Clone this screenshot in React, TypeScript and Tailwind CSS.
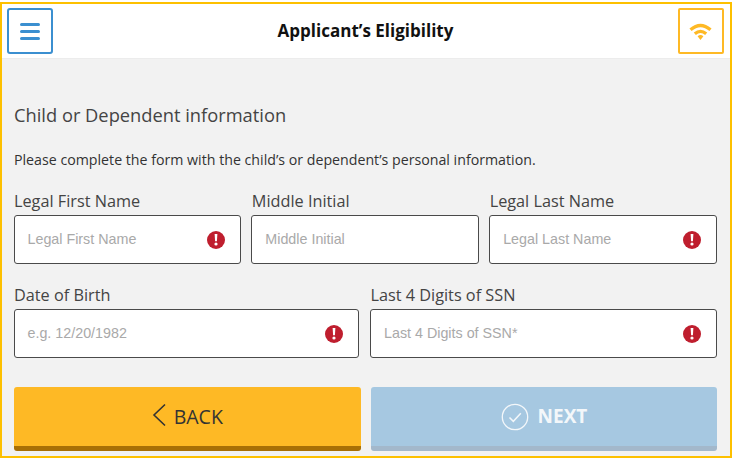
function ErrorDot() {
  return (
    <span className="flex h-[18px] w-[18px] shrink-0 items-center justify-center rounded-full bg-[#bf1e2e]">
      <svg width="4" height="12" viewBox="0 0 4 12" fill="#fff">
        <path d="M0.6 0h2.8l-0.5 7.2H1.1z" />
        <circle cx="2" cy="10" r="1.6" />
      </svg>
    </span>
  );
}

function Field({ label, placeholder, error = true }: { label: string; placeholder: string; error?: boolean }) {
  return (
    <div className="min-w-0">
      <div className="h-[24px] pl-[0.5px] text-[16.25px] leading-[20px] text-[#444]">{label}</div>
      <div className="flex h-[49px] items-center justify-between rounded-[3px] border-[1.5px] border-[#4a4a4a] bg-white pl-[13px] pr-[15px]">
        <span className="font-['Liberation_Sans',sans-serif] text-[14.3px] text-[#a9a9a9]">{placeholder}</span>
        {error && <ErrorDot />}
      </div>
    </div>
  );
}

export default function App() {
  return (
    <div className="mt-[2px] flex h-[456px] w-[732px] flex-col border-2 border-[#fdc000] bg-[#f2f2f2] font-['Open_Sans',sans-serif]">
      <header className="flex h-[55px] shrink-0 items-start justify-between border-b border-[#ececec] bg-white pl-[5px] pr-[6px] pt-[4px]">
        <button className="flex h-[46px] w-[46px] items-center justify-center rounded-[3px] border-2 border-[#3b8fd0]">
          <svg width="20" height="17" viewBox="0 0 20 17" fill="#3b8fd0">
            <rect y="0" width="20" height="3" rx="1.5" />
            <rect y="7" width="20" height="3" rx="1.5" />
            <rect y="14" width="20" height="3" rx="1.5" />
          </svg>
        </button>
        <h1 className="pt-[9px] text-[17px] font-bold leading-[28px] text-[#111]">Applicant’s Eligibility</h1>
        <button className="flex h-[46px] w-[46px] items-center justify-center rounded-[2px] border-2 border-[#feb925]">
          <svg width="23" height="17" viewBox="0 0 23 17" fill="none" stroke="#feb925" strokeWidth="3.200">
            <path d="M1.500 6.800Q11.500-1.800 21.500 6.800" />
            <path d="M5.800 10.800Q11.500 5.800 17.200 10.800" />
            <path d="M8.600 13.200Q11.500 11 14.400 13.200L11.500 17z" fill="#feb925" stroke="none" />
          </svg>
        </button>
      </header>

      <main className="flex flex-1 flex-col pl-[11.5px] pr-[13px]">
        <h2 className="mt-[42px] pl-[0.5px] text-[18.3px] leading-[28px] text-[#444]">Child or Dependent information</h2>
        <p className="mt-[21px] pl-[0.5px] text-[14.2px] leading-[20px] text-[#333]">
          Please complete the form with the child’s or dependent’s personal information.
        </p>
        <div className="mt-[21px] grid grid-cols-3 gap-[10px]">
          <Field label="Legal First Name" placeholder="Legal First Name" />
          <Field label="Middle Initial" placeholder="Middle Initial" error={false} />
          <Field label="Legal Last Name" placeholder="Legal Last Name" />
        </div>
        <div className="mt-[21px] grid grid-cols-[345.5px_1fr] gap-[11px]">
          <Field label="Date of Birth" placeholder="e.g. 12/20/1982" />
          <Field label="Last 4 Digits of SSN" placeholder="Last 4 Digits of SSN*" />
        </div>
        <div className="mt-[29px] grid grid-cols-[347.5px_1fr] gap-[10px]">
          <button className="flex h-[64px] items-center justify-center gap-[8px] rounded-[3px] border-b-[5px] border-[#a86f05] bg-[#feb925] text-[19.5px] font-medium text-[#333]">
            <svg width="14" height="24" viewBox="0 0 14 24" fill="none" stroke="#333" strokeWidth="1.600" className="-mt-[4px]">
              <path d="M13 1.500L2 12l11 10.500" />
            </svg>
            <span>BACK</span>
          </button>
          <button className="flex h-[64px] items-center justify-center gap-[9px] rounded-[3px] border-b-[5px] border-[#a3b8cb] bg-[#a6c8e1] text-[19px] font-bold text-[#f3f7fa]">
            <svg width="28" height="28" viewBox="0 0 28 28" fill="none" stroke="#f3f7fa" strokeWidth="1.300">
              <circle cx="14" cy="14" r="12.700" />
              <path d="M8.500 14.500l3.800 3.800 7.500-8" strokeWidth="1.500" />
            </svg>
            <span>NEXT</span>
          </button>
        </div>
      </main>
    </div>
  );
}
